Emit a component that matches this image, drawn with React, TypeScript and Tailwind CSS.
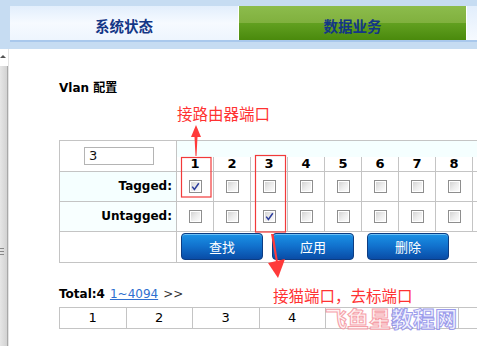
import React from "react";

const ports = [1, 2, 3, 4, 5, 6, 7, 8, 9];

function Cb({ checked }: { checked?: boolean }) {
  return (
    <span className="inline-flex w-[13px] h-[13px] border border-[#8e8e8e] bg-white align-middle p-[1px]">
      <span className="flex-1 flex items-center justify-center bg-gradient-to-br from-[#d4d4d4] via-[#ececec] to-[#fcfcfc]">
        {checked && (
          <svg width="9" height="9" viewBox="0 0 9 9">
            <path d="M1.2 4.6 L3.4 7.4 L7.8 1.2" fill="none" stroke="#2c3d9c" strokeWidth="1.5" />
          </svg>
        )}
      </span>
    </span>
  );
}

function Btn({ label, cls }: { label: string; cls: string }) {
  return (
    <div
      className={`w-[82px] h-[27px] rounded-[4px] border border-[#0d3d82] bg-gradient-to-b from-[#1c93e6] via-[#1170cc] to-[#0a4ca6] shadow-[inset_0_1px_0_#6cc0f6] flex items-center justify-center text-white text-[13px] ${cls}`}
      style={{ fontFamily: '"Noto Sans CJK SC", sans-serif' }}
    >
      {label}
    </div>
  );
}

export default function App() {
  const bd = "border-[#c4c4c4]";
  return (
    <div
      className="relative w-[477px] h-[346px] overflow-hidden bg-white text-black"
      style={{ fontFamily: '"DejaVu Sans", "Noto Sans CJK SC", sans-serif' }}
    >
      {/* top band */}
      <div className="h-[49px] bg-[#c6dcf2] pt-[6px] pl-[10px]">
        <div className="flex h-[36px] border-b-2 border-[#a9c8ec]">
          <div className="shrink-0 w-[228px] h-[34px] bg-gradient-to-b from-[#e2eefc] via-[#f6faff] to-[#eef5fe] flex items-center justify-center pt-[5px]">
            <span className="text-[14.5px] font-bold text-[#133686]" style={{ fontFamily: '"Noto Sans CJK SC", sans-serif' }}>
              系统状态
            </span>
          </div>
          <div className="shrink-0 w-[1px] h-[34px] bg-white" />
          <div className="shrink-0 w-[227px] h-[34px] flex flex-col relative">
            <div className="h-[17px] bg-gradient-to-b from-[#8cbc4c] to-[#80b03e]" />
            <div className="h-[17px] bg-gradient-to-b from-[#62a020] to-[#4a8a0c]" />
            <span
              className="absolute inset-0 flex items-center justify-center pt-[5px] text-[14.5px] font-bold text-[#133686]"
              style={{ fontFamily: '"Noto Sans CJK SC", sans-serif' }}
            >
              数据业务
            </span>
          </div>
          <div className="shrink-0 w-[1px] h-[34px] bg-white" />
          <div className="shrink-0 w-[40px] h-[34px] bg-gradient-to-b from-[#e2eefc] to-[#f6faff]" />
        </div>
      </div>

      <div className="flex h-[297px]">
        {/* left strip */}
        <div className="shrink-0 w-[9px] flex flex-col border-r border-[#e4e4e4]">
          <div className="h-[17px] relative">
            <div className="absolute left-0 top-[6px] w-0 h-0 border-l-[3px] border-r-[3px] border-b-[3px] border-l-transparent border-r-transparent border-b-[#555]" />
          </div>
          <div className="flex-1 w-[8px] bg-gradient-to-r from-[#e6e6e6] to-[#d2d2d2] border-r border-[#a8a8a8] relative">
            <div className="absolute left-0 top-[182px] w-[4px] flex flex-col gap-[2px]">
              <div className="h-[1px] bg-[#888]" />
              <div className="h-[1px] bg-[#888]" />
              <div className="h-[1px] bg-[#888]" />
            </div>
          </div>
        </div>

        {/* content */}
        <div className="shrink-0 pl-[50px] pt-[30px]">
          <div className="text-[12px] font-bold leading-[16px]">
            Vlan <span style={{ fontFamily: '"Noto Sans CJK SC", sans-serif' }}>配置</span>
          </div>

          <table className="mt-[44px] border-collapse table-fixed w-[450px] leading-none">
            <colgroup>
              <col className="w-[117px]" />
              {ports.map((p) => (
                <col key={p} className="w-[37px]" />
              ))}
            </colgroup>
            <tbody>
              <tr className="h-[16px]">
                <td rowSpan={2} className={`border ${bd} bg-white text-center p-0`}>
                  <div className="ml-[24px] w-[70px] h-[18px] border border-[#b4b4b4] text-[13px] leading-[16px] pl-[4px] text-left text-[#111]">
                    3
                  </div>
                </td>
                <td colSpan={9} className={`border-t ${bd} bg-[#f5ffff] p-0`} />
              </tr>
              <tr className="h-[14px]">
                {ports.map((p) => (
                  <td key={p} className={`border-l border-r ${bd} text-center font-bold text-[13px] leading-[14px] p-0`}>
                    {p < 9 ? p : ""}
                  </td>
                ))}
              </tr>
              <tr className="h-[30px]">
                <td className={`border ${bd} bg-[#f5ffff] text-right font-bold text-[12px] p-0`}>
                  <span className="pr-[4px]">Tagged:</span>
                </td>
                {ports.map((p) => (
                  <td key={p} className={`border ${bd} text-center p-0`}>
                    <Cb checked={p === 1} />
                  </td>
                ))}
              </tr>
              <tr className="h-[30px]">
                <td className={`border ${bd} bg-[#f8ffff] text-right font-bold text-[12px] p-0`}>
                  <span className="pr-[4px]">Untagged:</span>
                </td>
                {ports.map((p) => (
                  <td key={p} className={`border ${bd} text-center p-0`}>
                    <Cb checked={p === 3} />
                  </td>
                ))}
              </tr>
              <tr className="h-[31px]">
                <td className={`border ${bd} bg-white p-0`} />
                <td colSpan={9} className={`border ${bd} p-0`}>
                  <div className="flex">
                    <Btn label="查找" cls="ml-[4px]" />
                    <Btn label="应用" cls="ml-[9px]" />
                    <Btn label="删除" cls="ml-[13px]" />
                  </div>
                </td>
              </tr>
            </tbody>
          </table>

          <div className="mt-[23px] text-[12px] leading-[16px] flex items-baseline">
            <span className="font-bold">Total:4</span>
            <span className="ml-[5px] text-[#2f6fd0] underline">1~4094</span>
            <span className="ml-[5px] text-[#333]">&gt;&gt;</span>
          </div>

          <table className="mt-[5px] border-collapse table-fixed w-[466px]">
            <tbody>
              <tr className="h-[21px]">
                {[1, 2, 3, 4, 0, 0, 0].map((n, i) => (
                  <td key={i} className={`border ${bd} w-[66.5px] text-center text-[13px] leading-[16px] p-0`}>
                    {n ? n : ""}
                  </td>
                ))}
              </tr>
            </tbody>
          </table>
        </div>
      </div>

      {/* annotations */}
      <div
        className="absolute left-[177px] top-[105px] text-[15.5px] leading-[16px] text-[#ff3232]"
        style={{ fontFamily: '"Noto Sans CJK SC", sans-serif' }}
      >
        接路由器端口
      </div>
      <div
        className="absolute left-[273px] top-[287px] text-[15.5px] leading-[16px] text-[#ff3232]"
        style={{ fontFamily: '"Noto Sans CJK SC", sans-serif' }}
      >
        接猫端口，去标端口
      </div>

      <svg className="absolute left-0 top-0 pointer-events-none" width="477" height="346">
        <polygon points="196,125 191,137 194.5,137 195.5,156 196.5,156 197.5,137 201,137" fill="#ff3a3a" />
        <polygon points="271,234 273.5,234 278,262 276,262" fill="#ff3a3a" />
        <polygon points="268,263 285,259 278,278" fill="#ff3a3a" />
        <rect x="181.5" y="157.5" width="29.5" height="39.5" fill="none" stroke="#f23a3a" strokeWidth="1.2" />
        <rect x="255.5" y="155.5" width="30" height="76.5" fill="none" stroke="#f23a3a" strokeWidth="1.2" />
      </svg>

      {/* watermark */}
      <div
        className="absolute left-[325px] top-[305px] text-[22px] font-bold leading-[24px] flex opacity-85"
        style={{ fontFamily: '"Noto Sans CJK SC", sans-serif' }}
      >
        <span className="text-[#fff0f2] [-webkit-text-stroke:1px_#f4909a]">飞鱼星</span>
        <span className="text-[#f0f0ff] [-webkit-text-stroke:1px_#8a8ae8]">教程网</span>
      </div>
    </div>
  );
}
